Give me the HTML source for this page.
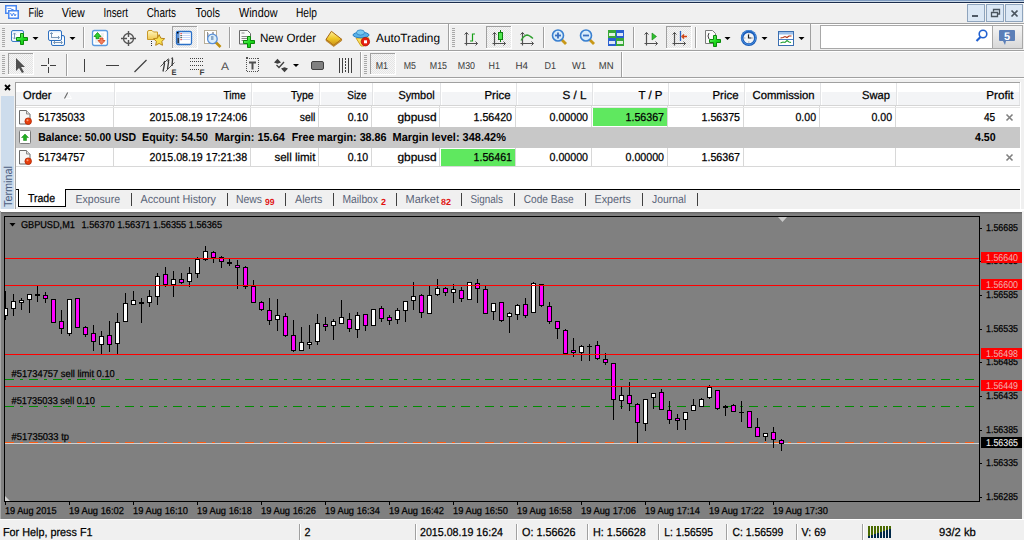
<!DOCTYPE html>
<html><head><meta charset="utf-8"><title>MetaTrader 4</title>
<style>html,body{margin:0;padding:0;background:#f0f0f0;overflow:hidden}svg{display:block}</style></head>
<body><svg width="1024" height="540" viewBox="0 0 1024 540" text-rendering="geometricPrecision">
<rect x="0" y="0" width="1024" height="540" fill="#f0f0f0" />
<rect x="0" y="0" width="1024" height="1" fill="#7f9bc0" />
<rect x="0" y="1" width="1024" height="1" fill="#c5d5e5" />
<rect x="0" y="2" width="1024" height="1" fill="#1b2d4d" />
<rect x="0" y="3" width="1024" height="1" fill="#fafafa" />
<rect x="5.75" y="5.75" width="10.5" height="7.5" fill="#fff" stroke="#4a88f0" stroke-width="1.5"/>
<path d="M7.5 9 l1 -1 l1 1 l1 -1 l1 1.5 h2" stroke="#4a88f0" fill="none" stroke-width="1"/>
<rect x="8.75" y="10.75" width="9.5" height="7.5" fill="#fff" stroke="#4a88f0" stroke-width="1.5"/>
<path d="M10.5 13 l1.5 3 l1.5 -3 l1.5 3 l1 -2" stroke="#4a88f0" fill="none" stroke-width="1"/>
<text x="28.5" y="17" font-family="Liberation Sans" font-size="13" fill="#000" text-anchor="start" font-weight="normal" textLength="15" lengthAdjust="spacingAndGlyphs" >File</text>
<text x="61.8" y="17" font-family="Liberation Sans" font-size="13" fill="#000" text-anchor="start" font-weight="normal" textLength="23" lengthAdjust="spacingAndGlyphs" >View</text>
<text x="103.5" y="17" font-family="Liberation Sans" font-size="13" fill="#000" text-anchor="start" font-weight="normal" textLength="24.5" lengthAdjust="spacingAndGlyphs" >Insert</text>
<text x="146.7" y="17" font-family="Liberation Sans" font-size="13" fill="#000" text-anchor="start" font-weight="normal" textLength="29.3" lengthAdjust="spacingAndGlyphs" >Charts</text>
<text x="195.5" y="17" font-family="Liberation Sans" font-size="13" fill="#000" text-anchor="start" font-weight="normal" textLength="24.5" lengthAdjust="spacingAndGlyphs" >Tools</text>
<text x="239" y="17" font-family="Liberation Sans" font-size="13" fill="#000" text-anchor="start" font-weight="normal" textLength="38.5" lengthAdjust="spacingAndGlyphs" >Window</text>
<text x="296" y="17" font-family="Liberation Sans" font-size="13" fill="#000" text-anchor="start" font-weight="normal" textLength="21" lengthAdjust="spacingAndGlyphs" >Help</text>
<rect x="967.5" y="4.5" width="17" height="17" fill="#dce8f5" stroke="#8ea4bd"/>
<rect x="986.5" y="4.5" width="17" height="17" fill="#dce8f5" stroke="#8ea4bd"/>
<rect x="1005.5" y="4.5" width="17" height="17" fill="#dce8f5" stroke="#8ea4bd"/>
<rect x="972" y="15" width="6" height="2" fill="#505a66" />
<path d="M991.5 12.5 h6 v4 h-6 z M993.5 11.5 v-2 h6 v4.5 h-2" fill="none" stroke="#4a545e" stroke-width="1.3"/>
<path d="M1011.5 10.5 l6 6 M1017.5 10.5 l-6 6" stroke="#4a545e" stroke-width="1.7"/>
<rect x="0" y="23" width="1024" height="1" fill="#a0a0a0" />
<rect x="0" y="24" width="1024" height="1" fill="#ffffff" />
<rect x="0" y="50" width="1024" height="1" fill="#a0a0a0" />
<rect x="0" y="51" width="1024" height="1" fill="#ffffff" />
<rect x="0" y="77" width="1024" height="1" fill="#a0a0a0" />
<rect x="0" y="78" width="1024" height="1" fill="#ffffff" />
<rect x="2" y="28" width="3" height="1" fill="#a8a8a8" />
<rect x="2" y="30" width="3" height="1" fill="#a8a8a8" />
<rect x="2" y="32" width="3" height="1" fill="#a8a8a8" />
<rect x="2" y="34" width="3" height="1" fill="#a8a8a8" />
<rect x="2" y="36" width="3" height="1" fill="#a8a8a8" />
<rect x="2" y="38" width="3" height="1" fill="#a8a8a8" />
<rect x="2" y="40" width="3" height="1" fill="#a8a8a8" />
<rect x="2" y="42" width="3" height="1" fill="#a8a8a8" />
<rect x="2" y="44" width="3" height="1" fill="#a8a8a8" />
<rect x="2" y="46" width="3" height="1" fill="#a8a8a8" />
<defs><linearGradient id="gp" x1="0" y1="0" x2="1" y2="1"><stop offset="0" stop-color="#9cf59c"/><stop offset=".5" stop-color="#20e020"/><stop offset="1" stop-color="#10b010"/></linearGradient><linearGradient id="wb" x1="0" y1="0" x2="0" y2="1"><stop offset="0" stop-color="#cfe2f8"/><stop offset=".3" stop-color="#ffffff"/><stop offset="1" stop-color="#eef4fb"/></linearGradient><linearGradient id="gold" x1="0" y1="0" x2="0" y2="1"><stop offset="0" stop-color="#fff0a0"/><stop offset=".5" stop-color="#f0c828"/><stop offset="1" stop-color="#c89018"/></linearGradient><linearGradient id="fold" x1="0" y1="0" x2="0" y2="1"><stop offset="0" stop-color="#fff8c0"/><stop offset="1" stop-color="#f0c850"/></linearGradient><pattern id="dots" width="2" height="2" patternUnits="userSpaceOnUse"><rect width="2" height="2" fill="#f6f6f6"/><rect width="1" height="1" fill="#e4e4e4"/><rect x="1" y="1" width="1" height="1" fill="#e4e4e4"/></pattern></defs>
<rect x="11.5" y="30.5" width="12" height="11" rx="1.5" fill="url(#wb)" stroke="#3a7cc8"/>
<path d="M14.5 33 v6 M13 34.5 l1.5 -1.5 l1.5 1.5 M13 37.5 l1.5 1.5 l1.5 -1.5" stroke="#7a98b8" fill="none"/>
<path d="M20.5 33.5 h3 v4 h4 v3 h-4 v4 h-3 v-4 h-4 v-3 h4 z" fill="url(#gp)" stroke="#0a8a0a" stroke-width="1"/>
<path d="M32.5 37 h6 l-3 3 z" fill="#000"/>
<rect x="51.5" y="35.5" width="13" height="10" rx="1.5" fill="url(#wb)" stroke="#2e70c0"/>
<path d="M54 42.5 h8 M55 41 l-1.5 1.5 l1.5 1.5 M61 41 l1.5 1.5 l-1.5 1.5" stroke="#7a98b8" fill="none"/>
<rect x="48.5" y="30.5" width="13" height="10" rx="1.5" fill="url(#wb)" stroke="#2e70c0"/>
<path d="M51.5 33 v5 M51 37.5 h8 M58 36 l1.5 1.5 l-1.5 1.5 M50 34 l1.5 -1.5 l1.5 1.5" stroke="#7a98b8" fill="none"/>
<path d="M69.5 37 h6 l-3 3 z" fill="#000"/>
<rect x="83" y="27" width="1" height="21" fill="#a0a0a0" />
<rect x="84" y="27" width="1" height="21" fill="#ffffff" />
<rect x="92.5" y="30.5" width="15" height="15" rx="2" fill="#fff" stroke="#5a9ae0" stroke-width="1.3"/>
<path d="M95 35 h4 M95 40 h3 M95 42 h4 M101 34 h3 M101 36 h3 M104 42 h1" stroke="#e0e0e0"/>
<path d="M97.5 32.5 l3.5 4 h-2 v2.2 h-3 v-2.2 h-2 z" fill="#30d030" stroke="#109010" stroke-width=".8"/>
<path d="M100 38 h3 v2.5 h2 l-3.5 3.8 l-3.5 -3.8 h2 z" fill="#f08060" stroke="#d04010" stroke-width=".8"/>
<circle cx="128.5" cy="38.5" r="5" fill="none" stroke="#555" stroke-width="1.3"/><path d="M128.5 31 v6 M128.5 40 v6 M121 38.5 h6 M130 38.5 h6" stroke="#555" stroke-width="1.4"/>
<path d="M147.5 32 q0 -1.5 1.5 -1.5 h3 l1.5 1.5 h4 v7.5 h-10 z" fill="url(#fold)" stroke="#c89828"/>
<path d="M151.5 41 v1 M151.5 43 v1 M151.5 45 v1" stroke="#303030"/>
<path d="M159.1 34.6 l1.7 3.6 3.9 .5 -2.9 2.7 .7 3.9 -3.4 -1.9 -3.4 1.9 .7 -3.9 -2.9 -2.7 3.9 -.5z" fill="#f8e050" stroke="#b88418" stroke-width="1"/>
<rect x="173" y="27" width="24" height="21" fill="url(#dots)"/>
<rect x="172" y="26" width="26" height="1" fill="#a0a0a0" />
<rect x="172" y="26" width="1" height="23" fill="#a0a0a0" />
<rect x="172" y="48" width="26" height="1" fill="#ffffff" />
<rect x="197" y="26" width="1" height="23" fill="#ffffff" />
<rect x="176.5" y="31.5" width="15" height="13" rx="1.5" fill="#fff" stroke="#2a70c8" stroke-width="1.3"/>
<rect x="177" y="32" width="2.5" height="12" fill="#6090d0"/><rect x="177.5" y="38" width="1.5" height="5" fill="#303840"/>
<path d="M182 33.5 h8 M182 35.5 h8 M182 37.5 h8 M182 39.5 h8" stroke="#c8d8f8"/>
<rect x="180.5" y="33" width="1.2" height="1.2" fill="#e02020"/><rect x="180.5" y="35" width="1.2" height="1.2" fill="#203020"/><rect x="180.5" y="37" width="1.2" height="1.2" fill="#203020"/><rect x="180.5" y="39" width="1.2" height="1.2" fill="#e02020"/>
<rect x="177" y="32" width="1.5" height="1.5" fill="#000"/>
<rect x="204.5" y="30.5" width="12" height="13" fill="#fff" stroke="#b8ae98"/>
<path d="M207.5 32 v8 M207 34 h2 M213 32 v4 M212 33 h2" stroke="#909090"/>
<path d="M215.5 42 l5 5" stroke="#c09010" stroke-width="2.6"/>
<circle cx="212.4" cy="38.9" r="4.8" fill="#d8ecf8" fill-opacity=".9" stroke="#5a90d8" stroke-width="1.3"/>
<rect x="211" y="36" width="2.5" height="4" fill="#8aa8c8"/>
<rect x="229" y="27" width="1" height="21" fill="#a0a0a0" />
<rect x="230" y="27" width="1" height="21" fill="#ffffff" />
<path d="M239.5 30.5 h8 l3 3 v10.5 h-11 z" fill="#fafafa" stroke="#6a6a6a"/>
<path d="M241.5 33 h3 M241.5 36.5 h6 M241.5 38.5 h6 M241.5 40.5 h3" stroke="#888"/>
<path d="M247.5 36.5 h3 v4 h4 v3 h-4 v4 h-3 v-4 h-4 v-3 h4 z" fill="url(#gp)" stroke="#0a8a0a" stroke-width="1"/>
<text x="260" y="42" font-family="Liberation Sans" font-size="12" fill="#000" text-anchor="start" font-weight="normal" textLength="56" lengthAdjust="spacingAndGlyphs" >New Order</text>
<path d="M331.4 31.3 l10.2 7.9 l-7.9 6.3 l-7.7 -6.1 z" fill="url(#gold)" stroke="#a86810" stroke-width="1"/>
<path d="M326 39.4 l7.7 6.1 l7.9 -6.3 v1.5 l-7.9 5.8 l-7.7 -5.8z" fill="#d8a838" stroke="#a86810" stroke-width=".6"/>
<path d="M356 38 h13 l-5 8 h-3 z" fill="#f8e060" stroke="#d0a020"/>
<ellipse cx="361" cy="35" rx="8" ry="2.8" fill="#58b0e8" stroke="#2a80c0"/><ellipse cx="360.5" cy="32.5" rx="4" ry="2.6" fill="#78c8f0" stroke="#2a80c0" stroke-width=".8"/>
<circle cx="365.4" cy="41.7" r="4.2" fill="#e82010" stroke="#b01000" stroke-width=".8"/><rect x="364" y="40.3" width="3" height="3" fill="#fff"/>
<text x="376" y="42" font-family="Liberation Sans" font-size="12" fill="#000" text-anchor="start" font-weight="normal" textLength="64" lengthAdjust="spacingAndGlyphs" >AutoTrading</text>
<rect x="448" y="24" width="1" height="26" fill="#a0a0a0" />
<rect x="449" y="24" width="1" height="26" fill="#ffffff" />
<rect x="452" y="28" width="3" height="1" fill="#a8a8a8" />
<rect x="452" y="30" width="3" height="1" fill="#a8a8a8" />
<rect x="452" y="32" width="3" height="1" fill="#a8a8a8" />
<rect x="452" y="34" width="3" height="1" fill="#a8a8a8" />
<rect x="452" y="36" width="3" height="1" fill="#a8a8a8" />
<rect x="452" y="38" width="3" height="1" fill="#a8a8a8" />
<rect x="452" y="40" width="3" height="1" fill="#a8a8a8" />
<rect x="452" y="42" width="3" height="1" fill="#a8a8a8" />
<rect x="452" y="44" width="3" height="1" fill="#a8a8a8" />
<rect x="452" y="46" width="3" height="1" fill="#a8a8a8" />
<path d="M466.5 32.5 v13 M464.5 43.5 h13" stroke="#505050" stroke-width="1.2"/><path d="M464.5 34.5 l2 -2 l2 2 M475.5 41.5 l2 2 l-2 2" stroke="#505050" fill="none"/>
<path d="M472.5 33.5 v8 M472.5 34 h2.5 M472.5 41 h-2.5" stroke="#18a018" fill="none" stroke-width="1.2"/>
<rect x="487" y="27" width="24" height="21" fill="url(#dots)"/>
<rect x="486" y="26" width="26" height="1" fill="#a0a0a0" />
<rect x="486" y="26" width="1" height="23" fill="#a0a0a0" />
<rect x="486" y="48" width="26" height="1" fill="#ffffff" />
<rect x="511" y="26" width="1" height="23" fill="#ffffff" />
<path d="M494.5 32.5 v13 M492.5 43.5 h13" stroke="#505050" stroke-width="1.2"/><path d="M492.5 34.5 l2 -2 l2 2 M503.5 41.5 l2 2 l-2 2" stroke="#505050" fill="none"/>
<path d="M500.5 30 v12" stroke="#108010"/><rect x="498.5" y="32.5" width="4" height="7" fill="#50e850" stroke="#108010"/>
<path d="M522.5 32.5 v13 M520.5 43.5 h13" stroke="#505050" stroke-width="1.2"/><path d="M520.5 34.5 l2 -2 l2 2 M531.5 41.5 l2 2 l-2 2" stroke="#505050" fill="none"/>
<path d="M521 40.5 q3 -5 6 -5.5 q2 0 6 3.5" stroke="#30a030" fill="none" stroke-width="1.3"/>
<rect x="543" y="27" width="1" height="21" fill="#a0a0a0" />
<rect x="544" y="27" width="1" height="21" fill="#ffffff" />
<path d="M561 39 l5 5" stroke="#c89818" stroke-width="2.8"/>
<circle cx="558" cy="35.5" r="5.5" fill="#d8ecfa" stroke="#3a80d0" stroke-width="1.6"/>
<path d="M555 35.5 h6" stroke="#3a70c0" stroke-width="1.8"/>
<path d="M558 32.5 v6" stroke="#3a70c0" stroke-width="1.8"/>
<path d="M589 39 l5 5" stroke="#c89818" stroke-width="2.8"/>
<circle cx="586" cy="35.5" r="5.5" fill="#d8ecfa" stroke="#3a80d0" stroke-width="1.6"/>
<path d="M583 35.5 h6" stroke="#3a70c0" stroke-width="1.8"/>
<rect x="608" y="30" width="8" height="8" fill="#38a838"/><rect x="609" y="33" width="6" height="3" fill="#fff" opacity=".85"/>
<rect x="616" y="30" width="8" height="8" fill="#2a60d0"/><rect x="617" y="33" width="6" height="3" fill="#fff" opacity=".85"/>
<rect x="608" y="38" width="8" height="8" fill="#2a60d0"/><rect x="609" y="41" width="6" height="3" fill="#fff" opacity=".85"/>
<rect x="616" y="38" width="8" height="8" fill="#38a838"/><rect x="617" y="41" width="6" height="3" fill="#fff" opacity=".85"/>
<rect x="633" y="27" width="1" height="21" fill="#a0a0a0" />
<rect x="634" y="27" width="1" height="21" fill="#ffffff" />
<path d="M646.5 32.5 v13 M644.5 43.5 h13" stroke="#505050" stroke-width="1.2"/><path d="M644.5 34.5 l2 -2 l2 2 M655.5 41.5 l2 2 l-2 2" stroke="#505050" fill="none"/>
<path d="M652 33 l4.5 3.5 l-4.5 3.5 z" fill="#30c030" stroke="#108010" stroke-width=".6"/>
<rect x="667" y="27" width="24" height="21" fill="url(#dots)"/>
<rect x="666" y="26" width="26" height="1" fill="#a0a0a0" />
<rect x="666" y="26" width="1" height="23" fill="#a0a0a0" />
<rect x="666" y="48" width="26" height="1" fill="#ffffff" />
<rect x="691" y="26" width="1" height="23" fill="#ffffff" />
<path d="M674.5 32.5 v13 M672.5 43.5 h13" stroke="#505050" stroke-width="1.2"/><path d="M672.5 34.5 l2 -2 l2 2 M683.5 41.5 l2 2 l-2 2" stroke="#505050" fill="none"/>
<path d="M680.5 31 v10" stroke="#2a60c0" stroke-width="1.3"/><path d="M687 36.5 h-4 M684 34.5 l-2 2 l2 2" stroke="#d04010" fill="none" stroke-width="1.3"/>
<rect x="695" y="27" width="1" height="21" fill="#a0a0a0" />
<rect x="696" y="27" width="1" height="21" fill="#ffffff" />
<path d="M705.5 30.5 h7 l3 3 v10 h-10 z" fill="#fafafa" stroke="#7a7a7a"/><path d="M709 33 q-2 3 0 6" stroke="#404040" fill="none"/>
<path d="M713.5 35.5 h3 v4 h4 v3 h-4 v4 h-3 v-4 h-4 v-3 h4 z" fill="url(#gp)" stroke="#0a8a0a" stroke-width="1"/>
<path d="M724.5 37 h6 l-3 3 z" fill="#000"/>
<circle cx="748.8" cy="38" r="8" fill="#1a5cb8"/><circle cx="748.8" cy="37.5" r="7" fill="none" stroke="#4a90e0" stroke-width="1"/><circle cx="748.8" cy="38" r="5.3" fill="#f2f5f8"/>
<path d="M748.8 33.5 v1 M748.8 41.5 v1 M744.3 38 h1 M752.3 38 h1" stroke="#909090"/><path d="M748.5 34.5 v3.5 h3" stroke="#202020" stroke-width="1.2" fill="none"/>
<path d="M761.5 37 h6 l-3 3 z" fill="#000"/>
<rect x="778.5" y="31.5" width="15" height="14" fill="#fff" stroke="#3a6eb0"/><rect x="779" y="32" width="14" height="2.5" fill="#9cc0ea"/>
<path d="M780.5 38 l2.5 -0.5 l2 -1 l2 1 l2 -1.5 l2.5 0" stroke="#b03010" fill="none" stroke-width="1.1"/>
<path d="M779 39.5 h14" stroke="#4a80c8"/>
<path d="M780.5 43 l2.5 -1 l2 0.5 l2 -2 l2 1.5 l2 0.5" stroke="#20a030" fill="none" stroke-width="1.1"/>
<path d="M798.5 37 h6 l-3 3 z" fill="#000"/>
<rect x="810" y="24" width="1" height="26" fill="#a0a0a0" />
<rect x="820.5" y="25.5" width="172" height="23" fill="#fff" stroke="#a8a8a8"/>
<circle cx="983" cy="34" r="3.8" fill="none" stroke="#2060d0" stroke-width="1.6"/><path d="M980.5 37 l-4 4" stroke="#2060d0" stroke-width="2.2"/>
<defs><linearGradient id="nb" x1="0" y1="0" x2="0" y2="1"><stop offset="0" stop-color="#f4f4f4"/><stop offset="1" stop-color="#d8d8d8"/></linearGradient></defs>
<rect x="992.5" y="25.5" width="30" height="23" fill="url(#nb)" stroke="#a8a8a8"/>
<path d="M1000 30 h14 a1 1 0 0 1 1 1 v9 a1 1 0 0 1 -1 1 h-8 l-1 4 l-2 -4 h-3 a1 1 0 0 1 -1 -1 v-9 a1 1 0 0 1 1 -1z" fill="#5b7fb8"/>
<text x="1007" y="40" font-family="Liberation Sans" font-size="11" fill="#fff" text-anchor="middle" font-weight="bold" >5</text>
<rect x="2" y="55" width="3" height="1" fill="#a8a8a8" />
<rect x="2" y="57" width="3" height="1" fill="#a8a8a8" />
<rect x="2" y="59" width="3" height="1" fill="#a8a8a8" />
<rect x="2" y="61" width="3" height="1" fill="#a8a8a8" />
<rect x="2" y="63" width="3" height="1" fill="#a8a8a8" />
<rect x="2" y="65" width="3" height="1" fill="#a8a8a8" />
<rect x="2" y="67" width="3" height="1" fill="#a8a8a8" />
<rect x="2" y="69" width="3" height="1" fill="#a8a8a8" />
<rect x="2" y="71" width="3" height="1" fill="#a8a8a8" />
<rect x="2" y="73" width="3" height="1" fill="#a8a8a8" />
<rect x="9" y="54" width="24" height="20" fill="url(#dots)"/>
<rect x="8" y="53" width="26" height="1" fill="#a0a0a0" />
<rect x="8" y="53" width="1" height="22" fill="#a0a0a0" />
<rect x="8" y="74" width="26" height="1" fill="#ffffff" />
<rect x="33" y="53" width="1" height="22" fill="#ffffff" />
<path d="M16 58 v13 l3 -3 l3 5 l2 -1 l-3 -5 h4 z" fill="#505050"/>
<path d="M48.5 58 v15 M41 65.5 h15" stroke="#404040" stroke-width="1"/>
<rect x="47" y="64" width="3" height="3" fill="#f0f0f0" />
<rect x="66" y="54" width="1" height="22" fill="#a0a0a0" />
<rect x="67" y="54" width="1" height="22" fill="#ffffff" />
<rect x="84" y="59" width="1" height="13" fill="#404040" />
<rect x="106" y="65" width="13" height="1" fill="#404040" />
<path d="M134.5 72 l12 -12" stroke="#404040" stroke-width="1.2"/>
<path d="M160.5 66.5 l8 -8 M165.5 71.5 l9 -9" stroke="#505050" stroke-width="1"/><path d="M163 71.5 L164.5 64 L163.8 63 L165 61 M167.5 69 L168.6 62 L168 61 L169.2 59.5 M172 66 L172.6 59 L172 58.5 L172.6 57.5" stroke="#383838" fill="none" stroke-width="1.3"/>
<text x="171.5" y="74.5" font-family="Liberation Sans" font-size="8" fill="#404040" text-anchor="start" font-weight="bold" textLength="5" lengthAdjust="spacingAndGlyphs" >E</text>
<rect x="190" y="58" width="1" height="1" fill="#404040" />
<rect x="192" y="58" width="1" height="1" fill="#404040" />
<rect x="194" y="58" width="1" height="1" fill="#404040" />
<rect x="196" y="58" width="1" height="1" fill="#404040" />
<rect x="198" y="58" width="1" height="1" fill="#404040" />
<rect x="200" y="58" width="1" height="1" fill="#404040" />
<rect x="202" y="58" width="1" height="1" fill="#404040" />
<rect x="190" y="61" width="1" height="1" fill="#404040" />
<rect x="192" y="61" width="1" height="1" fill="#404040" />
<rect x="194" y="61" width="1" height="1" fill="#404040" />
<rect x="196" y="61" width="1" height="1" fill="#404040" />
<rect x="198" y="61" width="1" height="1" fill="#404040" />
<rect x="200" y="61" width="1" height="1" fill="#404040" />
<rect x="202" y="61" width="1" height="1" fill="#404040" />
<rect x="190" y="65" width="1" height="1" fill="#404040" />
<rect x="192" y="65" width="1" height="1" fill="#404040" />
<rect x="194" y="65" width="1" height="1" fill="#404040" />
<rect x="196" y="65" width="1" height="1" fill="#404040" />
<rect x="198" y="65" width="1" height="1" fill="#404040" />
<rect x="200" y="65" width="1" height="1" fill="#404040" />
<rect x="202" y="65" width="1" height="1" fill="#404040" />
<rect x="190" y="69" width="1" height="1" fill="#404040" />
<rect x="192" y="69" width="1" height="1" fill="#404040" />
<rect x="194" y="69" width="1" height="1" fill="#404040" />
<rect x="196" y="69" width="1" height="1" fill="#404040" />
<rect x="198" y="69" width="1" height="1" fill="#404040" />
<text x="199.5" y="74.5" font-family="Liberation Sans" font-size="8" fill="#404040" text-anchor="start" font-weight="bold" textLength="5" lengthAdjust="spacingAndGlyphs" >F</text>
<text x="221" y="70" font-family="Liberation Sans" font-size="11" fill="#505050" text-anchor="start" font-weight="normal" textLength="8" lengthAdjust="spacingAndGlyphs" >A</text>
<rect x="247" y="58" width="1" height="1" fill="#505050" />
<rect x="247" y="71" width="1" height="1" fill="#505050" />
<rect x="249" y="58" width="1" height="1" fill="#505050" />
<rect x="249" y="71" width="1" height="1" fill="#505050" />
<rect x="251" y="58" width="1" height="1" fill="#505050" />
<rect x="251" y="71" width="1" height="1" fill="#505050" />
<rect x="253" y="58" width="1" height="1" fill="#505050" />
<rect x="253" y="71" width="1" height="1" fill="#505050" />
<rect x="255" y="58" width="1" height="1" fill="#505050" />
<rect x="255" y="71" width="1" height="1" fill="#505050" />
<rect x="257" y="58" width="1" height="1" fill="#505050" />
<rect x="257" y="71" width="1" height="1" fill="#505050" />
<rect x="246" y="58" width="1" height="1" fill="#505050" />
<rect x="258" y="58" width="1" height="1" fill="#505050" />
<rect x="246" y="60" width="1" height="1" fill="#505050" />
<rect x="258" y="60" width="1" height="1" fill="#505050" />
<rect x="246" y="62" width="1" height="1" fill="#505050" />
<rect x="258" y="62" width="1" height="1" fill="#505050" />
<rect x="246" y="64" width="1" height="1" fill="#505050" />
<rect x="258" y="64" width="1" height="1" fill="#505050" />
<rect x="246" y="66" width="1" height="1" fill="#505050" />
<rect x="258" y="66" width="1" height="1" fill="#505050" />
<rect x="246" y="68" width="1" height="1" fill="#505050" />
<rect x="258" y="68" width="1" height="1" fill="#505050" />
<rect x="246" y="70" width="1" height="1" fill="#505050" />
<rect x="258" y="70" width="1" height="1" fill="#505050" />
<rect x="246" y="57" width="2" height="2" fill="#505050" />
<path d="M249 62.5 h7 M252.5 62 v7.5" stroke="#505050" stroke-width="2"/>
<path d="M274 62.5 l3.5 -3.8 l3.5 3.8 l-3.5 1.2 z M281 68.5 l3.5 -1.2 l3.5 1.2 l-3.5 3.8 z" fill="#404040"/><path d="M276.5 65 l2.5 2.5 l5 -5.5" stroke="#404040" fill="none" stroke-width="1.3"/>
<path d="M293 64 h6 l-3 3 z" fill="#000"/>
<rect x="311.5" y="61.5" width="12" height="8" rx="1.5" fill="#808080" stroke="#404040"/>
<rect x="339" y="58" width="1" height="15" fill="#404040" />
<rect x="342" y="58" width="1" height="15" fill="#404040" />
<rect x="348" y="58" width="1" height="15" fill="#404040" />
<rect x="351" y="58" width="1" height="15" fill="#404040" />
<rect x="345" y="58" width="1" height="2" fill="#404040" />
<rect x="345" y="61" width="1" height="2" fill="#404040" />
<rect x="345" y="64" width="1" height="2" fill="#404040" />
<rect x="345" y="67" width="1" height="2" fill="#404040" />
<rect x="345" y="70" width="1" height="2" fill="#404040" />
<rect x="360" y="52" width="1" height="25" fill="#a0a0a0" />
<rect x="361" y="52" width="1" height="25" fill="#ffffff" />
<rect x="364" y="55" width="3" height="1" fill="#a8a8a8" />
<rect x="364" y="57" width="3" height="1" fill="#a8a8a8" />
<rect x="364" y="59" width="3" height="1" fill="#a8a8a8" />
<rect x="364" y="61" width="3" height="1" fill="#a8a8a8" />
<rect x="364" y="63" width="3" height="1" fill="#a8a8a8" />
<rect x="364" y="65" width="3" height="1" fill="#a8a8a8" />
<rect x="364" y="67" width="3" height="1" fill="#a8a8a8" />
<rect x="364" y="69" width="3" height="1" fill="#a8a8a8" />
<rect x="364" y="71" width="3" height="1" fill="#a8a8a8" />
<rect x="364" y="73" width="3" height="1" fill="#a8a8a8" />
<rect x="371" y="54" width="24" height="20" fill="url(#dots)"/>
<rect x="370" y="53" width="26" height="1" fill="#a0a0a0" />
<rect x="370" y="53" width="1" height="22" fill="#a0a0a0" />
<rect x="370" y="74" width="26" height="1" fill="#ffffff" />
<rect x="395" y="53" width="1" height="22" fill="#ffffff" />
<text x="375.75" y="69" font-family="Liberation Sans" font-size="10" fill="#404040" text-anchor="start" font-weight="normal" textLength="12.25" lengthAdjust="spacingAndGlyphs" stroke="#404040" stroke-width="0.05" >M1</text>
<text x="403.75" y="69" font-family="Liberation Sans" font-size="10" fill="#404040" text-anchor="start" font-weight="normal" textLength="12.25" lengthAdjust="spacingAndGlyphs" stroke="#404040" stroke-width="0.05" >M5</text>
<text x="429.75" y="69" font-family="Liberation Sans" font-size="10" fill="#404040" text-anchor="start" font-weight="normal" textLength="17.25" lengthAdjust="spacingAndGlyphs" stroke="#404040" stroke-width="0.05" >M15</text>
<text x="457.75" y="69" font-family="Liberation Sans" font-size="10" fill="#404040" text-anchor="start" font-weight="normal" textLength="17.25" lengthAdjust="spacingAndGlyphs" stroke="#404040" stroke-width="0.05" >M30</text>
<text x="488.6" y="69" font-family="Liberation Sans" font-size="10" fill="#404040" text-anchor="start" font-weight="normal" textLength="11.4" lengthAdjust="spacingAndGlyphs" stroke="#404040" stroke-width="0.05" >H1</text>
<text x="515.5" y="69" font-family="Liberation Sans" font-size="10" fill="#404040" text-anchor="start" font-weight="normal" textLength="12.5" lengthAdjust="spacingAndGlyphs" stroke="#404040" stroke-width="0.05" >H4</text>
<text x="544.5" y="69" font-family="Liberation Sans" font-size="10" fill="#404040" text-anchor="start" font-weight="normal" textLength="11.5" lengthAdjust="spacingAndGlyphs" stroke="#404040" stroke-width="0.05" >D1</text>
<text x="571.9" y="69" font-family="Liberation Sans" font-size="10" fill="#404040" text-anchor="start" font-weight="normal" textLength="14.1" lengthAdjust="spacingAndGlyphs" stroke="#404040" stroke-width="0.05" >W1</text>
<text x="598.75" y="69" font-family="Liberation Sans" font-size="10" fill="#404040" text-anchor="start" font-weight="normal" textLength="14.75" lengthAdjust="spacingAndGlyphs" stroke="#404040" stroke-width="0.05" >MN</text>
<rect x="621" y="52" width="1" height="25" fill="#a0a0a0" />
<rect x="622" y="52" width="1" height="25" fill="#ffffff" />
<path d="M5 85 l5 5 M10 85 l-5 5" stroke="#000" stroke-width="1.8"/>
<rect x="1" y="96" width="13" height="114" fill="#cddcec" />
<text transform="translate(12,207) rotate(-90)" font-family="Liberation Sans" font-size="11.5" fill="#4c5c80" textLength="41" lengthAdjust="spacingAndGlyphs">Terminal</text>
<rect x="15" y="82" width="1006" height="108" fill="#a0a0a0" />
<rect x="16" y="83" width="1004" height="106" fill="#ffffff" />
<rect x="16" y="83" width="1004" height="9" fill="#ffffff" />
<rect x="16" y="92" width="1004" height="13" fill="#f3f4f6" />
<rect x="16" y="105" width="1004" height="1" fill="#d5d5d5" />
<rect x="114" y="83" width="1" height="22" fill="#e2e3e5" />
<rect x="115" y="83" width="1" height="22" fill="#ffffff" />
<rect x="251" y="83" width="1" height="22" fill="#e2e3e5" />
<rect x="252" y="83" width="1" height="22" fill="#ffffff" />
<rect x="319" y="83" width="1" height="22" fill="#e2e3e5" />
<rect x="320" y="83" width="1" height="22" fill="#ffffff" />
<rect x="372" y="83" width="1" height="22" fill="#e2e3e5" />
<rect x="373" y="83" width="1" height="22" fill="#ffffff" />
<rect x="440" y="83" width="1" height="22" fill="#e2e3e5" />
<rect x="441" y="83" width="1" height="22" fill="#ffffff" />
<rect x="516" y="83" width="1" height="22" fill="#e2e3e5" />
<rect x="517" y="83" width="1" height="22" fill="#ffffff" />
<rect x="592" y="83" width="1" height="22" fill="#e2e3e5" />
<rect x="593" y="83" width="1" height="22" fill="#ffffff" />
<rect x="668" y="83" width="1" height="22" fill="#e2e3e5" />
<rect x="669" y="83" width="1" height="22" fill="#ffffff" />
<rect x="744" y="83" width="1" height="22" fill="#e2e3e5" />
<rect x="745" y="83" width="1" height="22" fill="#ffffff" />
<rect x="820" y="83" width="1" height="22" fill="#e2e3e5" />
<rect x="821" y="83" width="1" height="22" fill="#ffffff" />
<rect x="896" y="83" width="1" height="22" fill="#e2e3e5" />
<rect x="897" y="83" width="1" height="22" fill="#ffffff" />
<rect x="1019" y="83" width="1" height="22" fill="#e2e3e5" />
<rect x="113" y="106" width="1" height="21" fill="#d8d8d8" />
<rect x="250" y="106" width="1" height="21" fill="#d8d8d8" />
<rect x="318" y="106" width="1" height="21" fill="#d8d8d8" />
<rect x="371" y="106" width="1" height="21" fill="#d8d8d8" />
<rect x="439" y="106" width="1" height="21" fill="#d8d8d8" />
<rect x="515" y="106" width="1" height="21" fill="#d8d8d8" />
<rect x="591" y="106" width="1" height="21" fill="#d8d8d8" />
<rect x="667" y="106" width="1" height="21" fill="#d8d8d8" />
<rect x="743" y="106" width="1" height="21" fill="#d8d8d8" />
<rect x="819" y="106" width="1" height="21" fill="#d8d8d8" />
<rect x="895" y="106" width="1" height="21" fill="#d8d8d8" />
<rect x="113" y="148" width="1" height="18" fill="#d8d8d8" />
<rect x="250" y="148" width="1" height="18" fill="#d8d8d8" />
<rect x="318" y="148" width="1" height="18" fill="#d8d8d8" />
<rect x="371" y="148" width="1" height="18" fill="#d8d8d8" />
<rect x="439" y="148" width="1" height="18" fill="#d8d8d8" />
<rect x="515" y="148" width="1" height="18" fill="#d8d8d8" />
<rect x="591" y="148" width="1" height="18" fill="#d8d8d8" />
<rect x="667" y="148" width="1" height="18" fill="#d8d8d8" />
<rect x="743" y="148" width="1" height="18" fill="#d8d8d8" />
<rect x="895" y="148" width="1" height="18" fill="#d8d8d8" />
<rect x="16" y="166" width="1004" height="1" fill="#d8d8d8" />
<rect x="16" y="107" width="1004" height="1" fill="#e6e6e6" />
<rect x="16" y="127" width="1004" height="21" fill="#c8c8c8" />
<rect x="896" y="126" width="124" height="1" fill="#ffffff" />
<rect x="593" y="108" width="74" height="18" fill="#5fe85f" />
<rect x="441" y="149" width="74" height="17" fill="#5fe85f" />
<text x="23" y="99" font-family="Liberation Sans" font-size="11.5" fill="#000" text-anchor="start" font-weight="normal" textLength="28.5" lengthAdjust="spacingAndGlyphs" stroke="#000" stroke-width="0.25" >Order</text>
<path d="M68 92.5 l3.5 6 h-7" stroke="#ffffff" fill="none"/><path d="M64.5 98.5 l3.2 -6" stroke="#666" stroke-width="1.1"/>
<text x="245.5" y="99" font-family="Liberation Sans" font-size="11.5" fill="#000" text-anchor="end" font-weight="normal" textLength="22" lengthAdjust="spacingAndGlyphs" stroke="#000" stroke-width="0.25" >Time</text>
<text x="313.5" y="99" font-family="Liberation Sans" font-size="11.5" fill="#000" text-anchor="end" font-weight="normal" textLength="22.5" lengthAdjust="spacingAndGlyphs" stroke="#000" stroke-width="0.25" >Type</text>
<text x="366.6" y="99" font-family="Liberation Sans" font-size="11.5" fill="#000" text-anchor="end" font-weight="normal" textLength="19.3" lengthAdjust="spacingAndGlyphs" stroke="#000" stroke-width="0.25" >Size</text>
<text x="434.6" y="99" font-family="Liberation Sans" font-size="11.5" fill="#000" text-anchor="end" font-weight="normal" textLength="36.2" lengthAdjust="spacingAndGlyphs" stroke="#000" stroke-width="0.25" >Symbol</text>
<text x="510.5" y="99" font-family="Liberation Sans" font-size="11.5" fill="#000" text-anchor="end" font-weight="normal" textLength="26" lengthAdjust="spacingAndGlyphs" stroke="#000" stroke-width="0.25" >Price</text>
<text x="586.5" y="99" font-family="Liberation Sans" font-size="11.5" fill="#000" text-anchor="end" font-weight="normal" textLength="24" lengthAdjust="spacingAndGlyphs" stroke="#000" stroke-width="0.25" >S / L</text>
<text x="662.5" y="99" font-family="Liberation Sans" font-size="11.5" fill="#000" text-anchor="end" font-weight="normal" textLength="24" lengthAdjust="spacingAndGlyphs" stroke="#000" stroke-width="0.25" >T / P</text>
<text x="738.5" y="99" font-family="Liberation Sans" font-size="11.5" fill="#000" text-anchor="end" font-weight="normal" textLength="26" lengthAdjust="spacingAndGlyphs" stroke="#000" stroke-width="0.25" >Price</text>
<text x="814.5" y="99" font-family="Liberation Sans" font-size="11.5" fill="#000" text-anchor="end" font-weight="normal" textLength="62" lengthAdjust="spacingAndGlyphs" stroke="#000" stroke-width="0.25" >Commission</text>
<text x="890" y="99" font-family="Liberation Sans" font-size="11.5" fill="#000" text-anchor="end" font-weight="normal" textLength="28" lengthAdjust="spacingAndGlyphs" stroke="#000" stroke-width="0.25" >Swap</text>
<text x="1013.5" y="99" font-family="Liberation Sans" font-size="11.5" fill="#000" text-anchor="end" font-weight="normal" textLength="27.2" lengthAdjust="spacingAndGlyphs" stroke="#000" stroke-width="0.25" >Profit</text>
<path d="M19.5 110.5 h7 l3.5 3.5 v10 h-10.5 z" fill="#f6f6f6" stroke="#6a6a6a"/><path d="M26.5 110.5 v3.5 h3.5" fill="#e0e0e0" stroke="#8a8a8a"/>
<circle cx="28.2" cy="121.2" r="3.3" fill="#e8400c" stroke="#a82000" stroke-width=".7"/><circle cx="27.5" cy="120.3" r="1" fill="#ffa080"/>
<path d="M19.5 150.5 h7 l3.5 3.5 v10 h-10.5 z" fill="#f6f6f6" stroke="#6a6a6a"/><path d="M26.5 150.5 v3.5 h3.5" fill="#e0e0e0" stroke="#8a8a8a"/>
<circle cx="28.2" cy="161.2" r="3.3" fill="#e8400c" stroke="#a82000" stroke-width=".7"/><circle cx="27.5" cy="160.3" r="1" fill="#ffa080"/>
<rect x="19.5" y="130.5" width="11" height="13" rx="1" fill="#fff" stroke="#7a7a7a"/><path d="M25 134 l-3.5 3.5 h2 v3 h3 v-3 h2 z" fill="#20b020" stroke="#108010" stroke-width=".5"/>
<text x="38.4" y="121" font-family="Liberation Sans" font-size="11.5" fill="#000" text-anchor="start" font-weight="normal" textLength="46.4" lengthAdjust="spacingAndGlyphs" stroke="#000" stroke-width="0.25" >51735033</text>
<text x="38.4" y="161" font-family="Liberation Sans" font-size="11.5" fill="#000" text-anchor="start" font-weight="normal" textLength="46.4" lengthAdjust="spacingAndGlyphs" stroke="#000" stroke-width="0.25" >51734757</text>
<text x="247.2" y="121" font-family="Liberation Sans" font-size="11.5" fill="#000" text-anchor="end" font-weight="normal" textLength="97.7" lengthAdjust="spacingAndGlyphs" stroke="#000" stroke-width="0.25" >2015.08.19 17:24:06</text>
<text x="315.4" y="121" font-family="Liberation Sans" font-size="11.5" fill="#000" text-anchor="end" font-weight="normal" textLength="15.6" lengthAdjust="spacingAndGlyphs" stroke="#000" stroke-width="0.25" >sell</text>
<text x="368.2" y="121" font-family="Liberation Sans" font-size="11.5" fill="#000" text-anchor="end" font-weight="normal" textLength="20.5" lengthAdjust="spacingAndGlyphs" stroke="#000" stroke-width="0.25" >0.10</text>
<text x="436.5" y="121" font-family="Liberation Sans" font-size="11.5" fill="#000" text-anchor="end" font-weight="normal" textLength="39" lengthAdjust="spacingAndGlyphs" stroke="#000" stroke-width="0.25" >gbpusd</text>
<text x="512" y="121" font-family="Liberation Sans" font-size="11.5" fill="#000" text-anchor="end" font-weight="normal" textLength="38.5" lengthAdjust="spacingAndGlyphs" stroke="#000" stroke-width="0.25" >1.56420</text>
<text x="588" y="121" font-family="Liberation Sans" font-size="11.5" fill="#000" text-anchor="end" font-weight="normal" textLength="38.5" lengthAdjust="spacingAndGlyphs" stroke="#000" stroke-width="0.25" >0.00000</text>
<text x="664" y="121" font-family="Liberation Sans" font-size="11.5" fill="#000" text-anchor="end" font-weight="normal" textLength="38.5" lengthAdjust="spacingAndGlyphs" stroke="#000" stroke-width="0.25" >1.56367</text>
<text x="740" y="121" font-family="Liberation Sans" font-size="11.5" fill="#000" text-anchor="end" font-weight="normal" textLength="38.5" lengthAdjust="spacingAndGlyphs" stroke="#000" stroke-width="0.25" >1.56375</text>
<text x="816" y="121" font-family="Liberation Sans" font-size="11.5" fill="#000" text-anchor="end" font-weight="normal" textLength="20.5" lengthAdjust="spacingAndGlyphs" stroke="#000" stroke-width="0.25" >0.00</text>
<text x="892" y="121" font-family="Liberation Sans" font-size="11.5" fill="#000" text-anchor="end" font-weight="normal" textLength="20.5" lengthAdjust="spacingAndGlyphs" stroke="#000" stroke-width="0.25" >0.00</text>
<text x="995.2" y="121" font-family="Liberation Sans" font-size="11.5" fill="#000" text-anchor="end" font-weight="normal" textLength="11.2" lengthAdjust="spacingAndGlyphs" stroke="#000" stroke-width="0.25" >45</text>
<text x="247.2" y="161" font-family="Liberation Sans" font-size="11.5" fill="#000" text-anchor="end" font-weight="normal" textLength="97.7" lengthAdjust="spacingAndGlyphs" stroke="#000" stroke-width="0.25" >2015.08.19 17:21:38</text>
<text x="315.4" y="161" font-family="Liberation Sans" font-size="11.5" fill="#000" text-anchor="end" font-weight="normal" textLength="41" lengthAdjust="spacingAndGlyphs" stroke="#000" stroke-width="0.25" >sell limit</text>
<text x="368.2" y="161" font-family="Liberation Sans" font-size="11.5" fill="#000" text-anchor="end" font-weight="normal" textLength="20.5" lengthAdjust="spacingAndGlyphs" stroke="#000" stroke-width="0.25" >0.10</text>
<text x="436.5" y="161" font-family="Liberation Sans" font-size="11.5" fill="#000" text-anchor="end" font-weight="normal" textLength="39" lengthAdjust="spacingAndGlyphs" stroke="#000" stroke-width="0.25" >gbpusd</text>
<text x="512" y="161" font-family="Liberation Sans" font-size="11.5" fill="#000" text-anchor="end" font-weight="normal" textLength="38.5" lengthAdjust="spacingAndGlyphs" stroke="#000" stroke-width="0.25" >1.56461</text>
<text x="588" y="161" font-family="Liberation Sans" font-size="11.5" fill="#000" text-anchor="end" font-weight="normal" textLength="38.5" lengthAdjust="spacingAndGlyphs" stroke="#000" stroke-width="0.25" >0.00000</text>
<text x="664" y="161" font-family="Liberation Sans" font-size="11.5" fill="#000" text-anchor="end" font-weight="normal" textLength="38.5" lengthAdjust="spacingAndGlyphs" stroke="#000" stroke-width="0.25" >0.00000</text>
<text x="740" y="161" font-family="Liberation Sans" font-size="11.5" fill="#000" text-anchor="end" font-weight="normal" textLength="38.5" lengthAdjust="spacingAndGlyphs" stroke="#000" stroke-width="0.25" >1.56367</text>
<text x="38.2" y="141" font-family="Liberation Sans" font-size="11.5" fill="#000" text-anchor="start" font-weight="bold" textLength="98" lengthAdjust="spacingAndGlyphs" >Balance: 50.00 USD</text>
<text x="142" y="141" font-family="Liberation Sans" font-size="11.5" fill="#000" text-anchor="start" font-weight="bold" textLength="66" lengthAdjust="spacingAndGlyphs" >Equity: 54.50</text>
<text x="214.7" y="141" font-family="Liberation Sans" font-size="11.5" fill="#000" text-anchor="start" font-weight="bold" textLength="70.2" lengthAdjust="spacingAndGlyphs" >Margin: 15.64</text>
<text x="291.7" y="141" font-family="Liberation Sans" font-size="11.5" fill="#000" text-anchor="start" font-weight="bold" textLength="94.8" lengthAdjust="spacingAndGlyphs" >Free margin: 38.86</text>
<text x="392.5" y="141" font-family="Liberation Sans" font-size="11.5" fill="#000" text-anchor="start" font-weight="bold" textLength="113.4" lengthAdjust="spacingAndGlyphs" >Margin level: 348.42%</text>
<text x="995.6" y="141" font-family="Liberation Sans" font-size="11.5" fill="#000" text-anchor="end" font-weight="bold" textLength="20.6" lengthAdjust="spacingAndGlyphs" >4.50</text>
<path d="M1006.5 114.5 l6 6 M1012.5 114.5 l-6 6" stroke="#808080" stroke-width="1.6"/>
<path d="M1006.5 154.5 l6 6 M1012.5 154.5 l-6 6" stroke="#808080" stroke-width="1.6"/>
<rect x="16" y="190" width="1005" height="19" fill="#f0f0f0" />
<rect x="15" y="190" width="1" height="20" fill="#a0a0a0" />
<rect x="16" y="189" width="1005" height="1" fill="#000000" />
<rect x="18" y="189" width="48" height="18" fill="#ffffff" />
<rect x="18" y="189" width="1" height="18" fill="#000" />
<rect x="65" y="189" width="1" height="18" fill="#000" />
<rect x="18" y="206" width="48" height="1" fill="#000" />
<rect x="16" y="190" width="2" height="17" fill="#ffffff" />
<rect x="1020" y="82" width="1" height="128" fill="#ffffff" />
<text x="27.9" y="202" font-family="Liberation Sans" font-size="11.5" fill="#000" text-anchor="start" font-weight="normal" textLength="27.2" lengthAdjust="spacingAndGlyphs" stroke="#000" stroke-width="0.25" >Trade</text>
<text x="75.5" y="202.7" font-family="Liberation Sans" font-size="11.5" fill="#5a6478" text-anchor="start" font-weight="normal" textLength="44.5" lengthAdjust="spacingAndGlyphs" >Exposure</text>
<text x="140.5" y="202.7" font-family="Liberation Sans" font-size="11.5" fill="#5a6478" text-anchor="start" font-weight="normal" textLength="75.5" lengthAdjust="spacingAndGlyphs" >Account History</text>
<text x="236" y="202.7" font-family="Liberation Sans" font-size="11.5" fill="#5a6478" text-anchor="start" font-weight="normal" textLength="26" lengthAdjust="spacingAndGlyphs" >News</text>
<text x="295" y="202.7" font-family="Liberation Sans" font-size="11.5" fill="#5a6478" text-anchor="start" font-weight="normal" textLength="27.5" lengthAdjust="spacingAndGlyphs" >Alerts</text>
<text x="342.5" y="202.7" font-family="Liberation Sans" font-size="11.5" fill="#5a6478" text-anchor="start" font-weight="normal" textLength="35.5" lengthAdjust="spacingAndGlyphs" >Mailbox</text>
<text x="405.5" y="202.7" font-family="Liberation Sans" font-size="11.5" fill="#5a6478" text-anchor="start" font-weight="normal" textLength="33.5" lengthAdjust="spacingAndGlyphs" >Market</text>
<text x="470.5" y="202.7" font-family="Liberation Sans" font-size="11.5" fill="#5a6478" text-anchor="start" font-weight="normal" textLength="32.5" lengthAdjust="spacingAndGlyphs" >Signals</text>
<text x="523.75" y="202.7" font-family="Liberation Sans" font-size="11.5" fill="#5a6478" text-anchor="start" font-weight="normal" textLength="50" lengthAdjust="spacingAndGlyphs" >Code Base</text>
<text x="594.5" y="202.7" font-family="Liberation Sans" font-size="11.5" fill="#5a6478" text-anchor="start" font-weight="normal" textLength="36.5" lengthAdjust="spacingAndGlyphs" >Experts</text>
<text x="652" y="202.7" font-family="Liberation Sans" font-size="11.5" fill="#5a6478" text-anchor="start" font-weight="normal" textLength="34" lengthAdjust="spacingAndGlyphs" >Journal</text>
<rect x="131" y="193" width="1" height="13" fill="#404040" />
<rect x="227" y="193" width="1" height="13" fill="#404040" />
<rect x="285" y="193" width="1" height="13" fill="#404040" />
<rect x="333" y="193" width="1" height="13" fill="#404040" />
<rect x="396" y="193" width="1" height="13" fill="#404040" />
<rect x="461" y="193" width="1" height="13" fill="#404040" />
<rect x="514" y="193" width="1" height="13" fill="#404040" />
<rect x="585" y="193" width="1" height="13" fill="#404040" />
<rect x="642" y="193" width="1" height="13" fill="#404040" />
<rect x="697" y="193" width="1" height="13" fill="#404040" />
<text x="265" y="205" font-family="Liberation Sans" font-size="9" fill="#e01010" text-anchor="start" font-weight="bold" textLength="9.5" lengthAdjust="spacingAndGlyphs" >99</text>
<text x="381" y="205" font-family="Liberation Sans" font-size="9" fill="#e01010" text-anchor="start" font-weight="bold" textLength="5" lengthAdjust="spacingAndGlyphs" >2</text>
<text x="441" y="205" font-family="Liberation Sans" font-size="9" fill="#e01010" text-anchor="start" font-weight="bold" textLength="10" lengthAdjust="spacingAndGlyphs" >82</text>
<rect x="0" y="209" width="1024" height="1" fill="#ffffff" />
<rect x="0" y="210" width="1024" height="1" fill="#ffffff" />
<rect x="0" y="212" width="1024" height="308" fill="#808080" />
<rect x="0" y="211" width="1024" height="1" fill="#ffffff" />
<rect x="0" y="212" width="1024" height="1" fill="#6a6a6a" />
<rect x="0" y="213" width="1024" height="1" fill="#767676" />
<rect x="0" y="211" width="1" height="309" fill="#a8a8a8" />
<rect x="1022" y="211" width="2" height="309" fill="#f4f4f4" />
<rect x="0" y="519" width="1024" height="1" fill="#ffffff" />
<clipPath id="cc"><rect x="5" y="217" width="974" height="284"/></clipPath>
<g clip-path="url(#cc)"><path d="M5 379.5 H974" stroke="#008c00" stroke-width="1" stroke-dasharray="9 6 3 6"/></g>
<g clip-path="url(#cc)"><path d="M5 406.5 H974" stroke="#008c00" stroke-width="1" stroke-dasharray="9 6 3 6"/></g>
<rect x="5" y="443" width="974" height="1" fill="#d0d0d0" />
<g clip-path="url(#cc)"><path d="M5 442.5 H974" stroke="#ff5a10" stroke-width="1" stroke-dasharray="9 6 3 6"/></g>
<g clip-path="url(#cc)" shape-rendering="crispEdges">
<rect x="5" y="291" width="1" height="29" fill="#000" />
<rect x="3" y="308" width="5" height="8" fill="#000" />
<rect x="4" y="309" width="3" height="6" fill="#ffffff" />
<rect x="13" y="294" width="1" height="22" fill="#000" />
<rect x="11" y="301" width="5" height="8" fill="#000" />
<rect x="12" y="302" width="3" height="6" fill="#ffffff" />
<rect x="21" y="298" width="1" height="12" fill="#000" />
<rect x="19" y="300" width="5" height="3" fill="#000" />
<rect x="20" y="301" width="3" height="1" fill="#ffffff" />
<rect x="29" y="294" width="1" height="19" fill="#000" />
<rect x="27" y="294" width="5" height="6" fill="#000" />
<rect x="28" y="295" width="3" height="4" fill="#ffffff" />
<rect x="37" y="286" width="1" height="16" fill="#000" />
<rect x="35" y="294" width="5" height="2" fill="#000" />
<rect x="45" y="292" width="1" height="11" fill="#000" />
<rect x="43" y="295" width="5" height="4" fill="#000" />
<rect x="44" y="296" width="3" height="2" fill="#ff00ff" />
<rect x="53" y="299" width="1" height="24" fill="#000" />
<rect x="51" y="299" width="5" height="24" fill="#000" />
<rect x="52" y="300" width="3" height="22" fill="#ff00ff" />
<rect x="61" y="310" width="1" height="24" fill="#000" />
<rect x="59" y="321" width="5" height="8" fill="#000" />
<rect x="60" y="322" width="3" height="6" fill="#ff00ff" />
<rect x="69" y="299" width="1" height="37" fill="#000" />
<rect x="67" y="299" width="5" height="35" fill="#000" />
<rect x="68" y="300" width="3" height="33" fill="#ffffff" />
<rect x="77" y="298" width="1" height="30" fill="#000" />
<rect x="75" y="298" width="5" height="30" fill="#000" />
<rect x="76" y="299" width="3" height="28" fill="#ff00ff" />
<rect x="85" y="326" width="1" height="11" fill="#000" />
<rect x="83" y="327" width="5" height="8" fill="#000" />
<rect x="84" y="328" width="3" height="6" fill="#ff00ff" />
<rect x="93" y="325" width="1" height="26" fill="#000" />
<rect x="91" y="333" width="5" height="9" fill="#000" />
<rect x="92" y="334" width="3" height="7" fill="#ff00ff" />
<rect x="101" y="331" width="1" height="23" fill="#000" />
<rect x="99" y="336" width="5" height="9" fill="#000" />
<rect x="100" y="337" width="3" height="7" fill="#ffffff" />
<rect x="109" y="321" width="1" height="31" fill="#000" />
<rect x="107" y="335" width="5" height="10" fill="#000" />
<rect x="108" y="336" width="3" height="8" fill="#ff00ff" />
<rect x="117" y="313" width="1" height="41" fill="#000" />
<rect x="115" y="322" width="5" height="22" fill="#000" />
<rect x="116" y="323" width="3" height="20" fill="#ffffff" />
<rect x="125" y="293" width="1" height="29" fill="#000" />
<rect x="123" y="303" width="5" height="19" fill="#000" />
<rect x="124" y="304" width="3" height="17" fill="#ffffff" />
<rect x="133" y="291" width="1" height="14" fill="#000" />
<rect x="131" y="300" width="5" height="5" fill="#000" />
<rect x="132" y="301" width="3" height="3" fill="#ffffff" />
<rect x="141" y="298" width="1" height="25" fill="#000" />
<rect x="139" y="302" width="5" height="2" fill="#000" />
<rect x="149" y="290" width="1" height="17" fill="#000" />
<rect x="147" y="296" width="5" height="7" fill="#000" />
<rect x="148" y="297" width="3" height="5" fill="#ffffff" />
<rect x="157" y="273" width="1" height="32" fill="#000" />
<rect x="155" y="276" width="5" height="21" fill="#000" />
<rect x="156" y="277" width="3" height="19" fill="#ffffff" />
<rect x="165" y="267" width="1" height="20" fill="#000" />
<rect x="163" y="274" width="5" height="11" fill="#000" />
<rect x="164" y="275" width="3" height="9" fill="#ff00ff" />
<rect x="173" y="271" width="1" height="26" fill="#000" />
<rect x="171" y="279" width="5" height="6" fill="#000" />
<rect x="172" y="280" width="3" height="4" fill="#ffffff" />
<rect x="181" y="273" width="1" height="11" fill="#000" />
<rect x="179" y="279" width="5" height="4" fill="#000" />
<rect x="180" y="280" width="3" height="2" fill="#ff00ff" />
<rect x="189" y="267" width="1" height="20" fill="#000" />
<rect x="187" y="273" width="5" height="9" fill="#000" />
<rect x="188" y="274" width="3" height="7" fill="#ffffff" />
<rect x="197" y="257" width="1" height="21" fill="#000" />
<rect x="195" y="259" width="5" height="15" fill="#000" />
<rect x="196" y="260" width="3" height="13" fill="#ffffff" />
<rect x="205" y="246" width="1" height="15" fill="#000" />
<rect x="203" y="251" width="5" height="9" fill="#000" />
<rect x="204" y="252" width="3" height="7" fill="#ffffff" />
<rect x="213" y="251" width="1" height="12" fill="#000" />
<rect x="211" y="252" width="5" height="6" fill="#000" />
<rect x="212" y="253" width="3" height="4" fill="#ff00ff" />
<rect x="221" y="256" width="1" height="12" fill="#000" />
<rect x="219" y="257" width="5" height="5" fill="#000" />
<rect x="220" y="258" width="3" height="3" fill="#ff00ff" />
<rect x="229" y="259" width="1" height="7" fill="#000" />
<rect x="227" y="262" width="5" height="2" fill="#000" />
<rect x="237" y="260" width="1" height="29" fill="#000" />
<rect x="235" y="265" width="5" height="3" fill="#000" />
<rect x="236" y="266" width="3" height="1" fill="#ff00ff" />
<rect x="245" y="266" width="1" height="23" fill="#000" />
<rect x="243" y="267" width="5" height="20" fill="#000" />
<rect x="244" y="268" width="3" height="18" fill="#ff00ff" />
<rect x="253" y="280" width="1" height="23" fill="#000" />
<rect x="251" y="286" width="5" height="17" fill="#000" />
<rect x="252" y="287" width="3" height="15" fill="#ff00ff" />
<rect x="261" y="301" width="1" height="10" fill="#000" />
<rect x="259" y="302" width="5" height="8" fill="#000" />
<rect x="260" y="303" width="3" height="6" fill="#ff00ff" />
<rect x="269" y="298" width="1" height="27" fill="#000" />
<rect x="267" y="310" width="5" height="11" fill="#000" />
<rect x="268" y="311" width="3" height="9" fill="#ff00ff" />
<rect x="277" y="299" width="1" height="32" fill="#000" />
<rect x="275" y="315" width="5" height="5" fill="#000" />
<rect x="276" y="316" width="3" height="3" fill="#ffffff" />
<rect x="285" y="313" width="1" height="24" fill="#000" />
<rect x="283" y="316" width="5" height="20" fill="#000" />
<rect x="284" y="317" width="3" height="18" fill="#ff00ff" />
<rect x="293" y="320" width="1" height="32" fill="#000" />
<rect x="291" y="335" width="5" height="16" fill="#000" />
<rect x="292" y="336" width="3" height="14" fill="#ff00ff" />
<rect x="301" y="327" width="1" height="24" fill="#000" />
<rect x="299" y="342" width="5" height="9" fill="#000" />
<rect x="300" y="343" width="3" height="7" fill="#ffffff" />
<rect x="309" y="325" width="1" height="24" fill="#000" />
<rect x="307" y="342" width="5" height="3" fill="#000" />
<rect x="308" y="343" width="3" height="1" fill="#ffffff" />
<rect x="317" y="314" width="1" height="31" fill="#000" />
<rect x="315" y="323" width="5" height="19" fill="#000" />
<rect x="316" y="324" width="3" height="17" fill="#ffffff" />
<rect x="325" y="317" width="1" height="14" fill="#000" />
<rect x="323" y="324" width="5" height="3" fill="#000" />
<rect x="324" y="325" width="3" height="1" fill="#ff00ff" />
<rect x="333" y="319" width="1" height="21" fill="#000" />
<rect x="331" y="321" width="5" height="5" fill="#000" />
<rect x="332" y="322" width="3" height="3" fill="#ffffff" />
<rect x="341" y="300" width="1" height="24" fill="#000" />
<rect x="339" y="317" width="5" height="7" fill="#000" />
<rect x="340" y="318" width="3" height="5" fill="#ffffff" />
<rect x="349" y="313" width="1" height="19" fill="#000" />
<rect x="347" y="319" width="5" height="10" fill="#000" />
<rect x="348" y="320" width="3" height="8" fill="#ff00ff" />
<rect x="357" y="312" width="1" height="26" fill="#000" />
<rect x="355" y="315" width="5" height="15" fill="#000" />
<rect x="356" y="316" width="3" height="13" fill="#ffffff" />
<rect x="365" y="314" width="1" height="17" fill="#000" />
<rect x="363" y="314" width="5" height="12" fill="#000" />
<rect x="364" y="315" width="3" height="10" fill="#ff00ff" />
<rect x="373" y="309" width="1" height="17" fill="#000" />
<rect x="371" y="309" width="5" height="17" fill="#000" />
<rect x="372" y="310" width="3" height="15" fill="#ffffff" />
<rect x="381" y="306" width="1" height="16" fill="#000" />
<rect x="379" y="308" width="5" height="11" fill="#000" />
<rect x="380" y="309" width="3" height="9" fill="#ff00ff" />
<rect x="389" y="315" width="1" height="10" fill="#000" />
<rect x="387" y="317" width="5" height="4" fill="#000" />
<rect x="388" y="318" width="3" height="2" fill="#ff00ff" />
<rect x="397" y="308" width="1" height="16" fill="#000" />
<rect x="395" y="310" width="5" height="10" fill="#000" />
<rect x="396" y="311" width="3" height="8" fill="#ffffff" />
<rect x="405" y="301" width="1" height="21" fill="#000" />
<rect x="403" y="301" width="5" height="10" fill="#000" />
<rect x="404" y="302" width="3" height="8" fill="#ffffff" />
<rect x="413" y="282" width="1" height="28" fill="#000" />
<rect x="411" y="296" width="5" height="5" fill="#000" />
<rect x="412" y="297" width="3" height="3" fill="#ffffff" />
<rect x="421" y="294" width="1" height="24" fill="#000" />
<rect x="419" y="295" width="5" height="18" fill="#000" />
<rect x="420" y="296" width="3" height="16" fill="#ff00ff" />
<rect x="429" y="286" width="1" height="28" fill="#000" />
<rect x="427" y="295" width="5" height="19" fill="#000" />
<rect x="428" y="296" width="3" height="17" fill="#ffffff" />
<rect x="437" y="279" width="1" height="17" fill="#000" />
<rect x="435" y="288" width="5" height="7" fill="#000" />
<rect x="436" y="289" width="3" height="5" fill="#ffffff" />
<rect x="445" y="287" width="1" height="9" fill="#000" />
<rect x="443" y="288" width="5" height="5" fill="#000" />
<rect x="444" y="289" width="3" height="3" fill="#ff00ff" />
<rect x="453" y="284" width="1" height="19" fill="#000" />
<rect x="451" y="289" width="5" height="4" fill="#000" />
<rect x="452" y="290" width="3" height="2" fill="#ffffff" />
<rect x="461" y="287" width="1" height="15" fill="#000" />
<rect x="459" y="290" width="5" height="9" fill="#000" />
<rect x="460" y="291" width="3" height="7" fill="#ff00ff" />
<rect x="469" y="282" width="1" height="18" fill="#000" />
<rect x="467" y="282" width="5" height="18" fill="#000" />
<rect x="468" y="283" width="3" height="16" fill="#ffffff" />
<rect x="477" y="279" width="1" height="24" fill="#000" />
<rect x="475" y="283" width="5" height="6" fill="#000" />
<rect x="476" y="284" width="3" height="4" fill="#ff00ff" />
<rect x="485" y="286" width="1" height="28" fill="#000" />
<rect x="483" y="289" width="5" height="25" fill="#000" />
<rect x="484" y="290" width="3" height="23" fill="#ff00ff" />
<rect x="493" y="303" width="1" height="17" fill="#000" />
<rect x="491" y="303" width="5" height="9" fill="#000" />
<rect x="492" y="304" width="3" height="7" fill="#ffffff" />
<rect x="501" y="302" width="1" height="20" fill="#000" />
<rect x="499" y="302" width="5" height="19" fill="#000" />
<rect x="500" y="303" width="3" height="17" fill="#ff00ff" />
<rect x="509" y="312" width="1" height="21" fill="#000" />
<rect x="507" y="313" width="5" height="4" fill="#000" />
<rect x="508" y="314" width="3" height="2" fill="#ffffff" />
<rect x="517" y="304" width="1" height="16" fill="#000" />
<rect x="515" y="305" width="5" height="10" fill="#000" />
<rect x="516" y="306" width="3" height="8" fill="#ffffff" />
<rect x="525" y="298" width="1" height="20" fill="#000" />
<rect x="523" y="304" width="5" height="12" fill="#000" />
<rect x="524" y="305" width="3" height="10" fill="#ff00ff" />
<rect x="533" y="282" width="1" height="31" fill="#000" />
<rect x="531" y="283" width="5" height="30" fill="#000" />
<rect x="532" y="284" width="3" height="28" fill="#ffffff" />
<rect x="541" y="284" width="1" height="23" fill="#000" />
<rect x="539" y="284" width="5" height="22" fill="#000" />
<rect x="540" y="285" width="3" height="20" fill="#ff00ff" />
<rect x="549" y="302" width="1" height="22" fill="#000" />
<rect x="547" y="306" width="5" height="16" fill="#000" />
<rect x="548" y="307" width="3" height="14" fill="#ff00ff" />
<rect x="557" y="321" width="1" height="18" fill="#000" />
<rect x="555" y="321" width="5" height="8" fill="#000" />
<rect x="556" y="322" width="3" height="6" fill="#ff00ff" />
<rect x="565" y="329" width="1" height="25" fill="#000" />
<rect x="563" y="330" width="5" height="24" fill="#000" />
<rect x="564" y="331" width="3" height="22" fill="#ff00ff" />
<rect x="573" y="338" width="1" height="19" fill="#000" />
<rect x="571" y="350" width="5" height="3" fill="#000" />
<rect x="572" y="351" width="3" height="1" fill="#ff00ff" />
<rect x="581" y="345" width="1" height="16" fill="#000" />
<rect x="579" y="346" width="5" height="7" fill="#000" />
<rect x="580" y="347" width="3" height="5" fill="#ffffff" />
<rect x="589" y="344" width="1" height="17" fill="#000" />
<rect x="587" y="346" width="5" height="1" fill="#000" />
<rect x="597" y="341" width="1" height="19" fill="#000" />
<rect x="595" y="345" width="5" height="14" fill="#000" />
<rect x="596" y="346" width="3" height="12" fill="#ff00ff" />
<rect x="605" y="353" width="1" height="12" fill="#000" />
<rect x="603" y="359" width="5" height="4" fill="#000" />
<rect x="604" y="360" width="3" height="2" fill="#ff00ff" />
<rect x="613" y="363" width="1" height="57" fill="#000" />
<rect x="611" y="363" width="5" height="37" fill="#000" />
<rect x="612" y="364" width="3" height="35" fill="#ff00ff" />
<rect x="621" y="387" width="1" height="22" fill="#000" />
<rect x="619" y="395" width="5" height="6" fill="#000" />
<rect x="620" y="396" width="3" height="4" fill="#ffffff" />
<rect x="629" y="382" width="1" height="29" fill="#000" />
<rect x="627" y="395" width="5" height="9" fill="#000" />
<rect x="628" y="396" width="3" height="7" fill="#ff00ff" />
<rect x="637" y="403" width="1" height="40" fill="#000" />
<rect x="635" y="404" width="5" height="19" fill="#000" />
<rect x="636" y="405" width="3" height="17" fill="#ff00ff" />
<rect x="645" y="399" width="1" height="32" fill="#000" />
<rect x="643" y="399" width="5" height="25" fill="#000" />
<rect x="644" y="400" width="3" height="23" fill="#ffffff" />
<rect x="653" y="393" width="1" height="16" fill="#000" />
<rect x="651" y="393" width="5" height="5" fill="#000" />
<rect x="652" y="394" width="3" height="3" fill="#ffffff" />
<rect x="661" y="389" width="1" height="21" fill="#000" />
<rect x="659" y="392" width="5" height="18" fill="#000" />
<rect x="660" y="393" width="3" height="16" fill="#ff00ff" />
<rect x="669" y="401" width="1" height="23" fill="#000" />
<rect x="667" y="410" width="5" height="10" fill="#000" />
<rect x="668" y="411" width="3" height="8" fill="#ff00ff" />
<rect x="677" y="414" width="1" height="16" fill="#000" />
<rect x="675" y="418" width="5" height="3" fill="#000" />
<rect x="676" y="419" width="3" height="1" fill="#ff00ff" />
<rect x="685" y="412" width="1" height="18" fill="#000" />
<rect x="683" y="412" width="5" height="8" fill="#000" />
<rect x="684" y="413" width="3" height="6" fill="#ffffff" />
<rect x="693" y="399" width="1" height="12" fill="#000" />
<rect x="691" y="405" width="5" height="6" fill="#000" />
<rect x="692" y="406" width="3" height="4" fill="#ffffff" />
<rect x="701" y="398" width="1" height="9" fill="#000" />
<rect x="699" y="399" width="5" height="8" fill="#000" />
<rect x="700" y="400" width="3" height="6" fill="#ffffff" />
<rect x="709" y="385" width="1" height="14" fill="#000" />
<rect x="707" y="387" width="5" height="11" fill="#000" />
<rect x="708" y="388" width="3" height="9" fill="#ffffff" />
<rect x="717" y="390" width="1" height="20" fill="#000" />
<rect x="715" y="390" width="5" height="19" fill="#000" />
<rect x="716" y="391" width="3" height="17" fill="#ff00ff" />
<rect x="725" y="405" width="1" height="11" fill="#000" />
<rect x="723" y="406" width="5" height="2" fill="#000" />
<rect x="733" y="404" width="1" height="8" fill="#000" />
<rect x="731" y="405" width="5" height="7" fill="#000" />
<rect x="732" y="406" width="3" height="5" fill="#ff00ff" />
<rect x="741" y="401" width="1" height="21" fill="#000" />
<rect x="739" y="412" width="5" height="1" fill="#000" />
<rect x="749" y="411" width="1" height="17" fill="#000" />
<rect x="747" y="411" width="5" height="17" fill="#000" />
<rect x="748" y="412" width="3" height="15" fill="#ff00ff" />
<rect x="757" y="418" width="1" height="19" fill="#000" />
<rect x="755" y="427" width="5" height="10" fill="#000" />
<rect x="756" y="428" width="3" height="8" fill="#ff00ff" />
<rect x="765" y="433" width="1" height="8" fill="#000" />
<rect x="763" y="433" width="5" height="4" fill="#000" />
<rect x="764" y="434" width="3" height="2" fill="#ffffff" />
<rect x="773" y="427" width="1" height="21" fill="#000" />
<rect x="771" y="432" width="5" height="8" fill="#000" />
<rect x="772" y="433" width="3" height="6" fill="#ff00ff" />
<rect x="781" y="439" width="1" height="12" fill="#000" />
<rect x="779" y="440" width="5" height="4" fill="#000" />
<rect x="780" y="441" width="3" height="2" fill="#ff00ff" />
</g>
<rect x="5" y="258" width="974" height="1" fill="#ff0000" />
<rect x="5" y="285" width="974" height="1" fill="#ff0000" />
<rect x="5" y="354" width="974" height="1" fill="#ff0000" />
<rect x="5" y="386" width="974" height="1" fill="#ff0000" />
<rect x="4" y="216" width="976" height="1" fill="#000" />
<rect x="4" y="501" width="976" height="1" fill="#000" />
<rect x="4" y="216" width="1" height="286" fill="#000" />
<rect x="979" y="216" width="1" height="286" fill="#000" />
<rect x="980" y="228" width="2" height="1" fill="#000" />
<text x="986" y="231" font-family="Liberation Sans" font-size="10" fill="#000" text-anchor="start" font-weight="normal" textLength="32" lengthAdjust="spacingAndGlyphs" stroke="#000" stroke-width="0.25" >1.56685</text>
<rect x="980" y="261" width="2" height="1" fill="#000" />
<text x="986" y="264" font-family="Liberation Sans" font-size="10" fill="#000" text-anchor="start" font-weight="normal" textLength="32" lengthAdjust="spacingAndGlyphs" stroke="#000" stroke-width="0.25" >1.56635</text>
<rect x="980" y="295" width="2" height="1" fill="#000" />
<text x="986" y="298" font-family="Liberation Sans" font-size="10" fill="#000" text-anchor="start" font-weight="normal" textLength="32" lengthAdjust="spacingAndGlyphs" stroke="#000" stroke-width="0.25" >1.56585</text>
<rect x="980" y="329" width="2" height="1" fill="#000" />
<text x="986" y="332" font-family="Liberation Sans" font-size="10" fill="#000" text-anchor="start" font-weight="normal" textLength="32" lengthAdjust="spacingAndGlyphs" stroke="#000" stroke-width="0.25" >1.56535</text>
<rect x="980" y="362" width="2" height="1" fill="#000" />
<text x="986" y="365" font-family="Liberation Sans" font-size="10" fill="#000" text-anchor="start" font-weight="normal" textLength="32" lengthAdjust="spacingAndGlyphs" stroke="#000" stroke-width="0.25" >1.56485</text>
<rect x="980" y="396" width="2" height="1" fill="#000" />
<text x="986" y="399" font-family="Liberation Sans" font-size="10" fill="#000" text-anchor="start" font-weight="normal" textLength="32" lengthAdjust="spacingAndGlyphs" stroke="#000" stroke-width="0.25" >1.56435</text>
<rect x="980" y="430" width="2" height="1" fill="#000" />
<text x="986" y="433" font-family="Liberation Sans" font-size="10" fill="#000" text-anchor="start" font-weight="normal" textLength="32" lengthAdjust="spacingAndGlyphs" stroke="#000" stroke-width="0.25" >1.56385</text>
<rect x="980" y="463" width="2" height="1" fill="#000" />
<text x="986" y="466" font-family="Liberation Sans" font-size="10" fill="#000" text-anchor="start" font-weight="normal" textLength="32" lengthAdjust="spacingAndGlyphs" stroke="#000" stroke-width="0.25" >1.56335</text>
<rect x="980" y="497" width="2" height="1" fill="#000" />
<text x="986" y="500" font-family="Liberation Sans" font-size="10" fill="#000" text-anchor="start" font-weight="normal" textLength="32" lengthAdjust="spacingAndGlyphs" stroke="#000" stroke-width="0.25" >1.56285</text>
<rect x="981" y="252" width="41" height="11" fill="#ff0000" />
<text x="986" y="261" font-family="Liberation Sans" font-size="10" fill="#f0b0b0" text-anchor="start" font-weight="normal" textLength="32" lengthAdjust="spacingAndGlyphs" >1.56640</text>
<rect x="981" y="279" width="41" height="11" fill="#ff0000" />
<text x="986" y="288" font-family="Liberation Sans" font-size="10" fill="#f0b0b0" text-anchor="start" font-weight="normal" textLength="32" lengthAdjust="spacingAndGlyphs" >1.56600</text>
<rect x="981" y="348" width="41" height="11" fill="#ff0000" />
<text x="986" y="357" font-family="Liberation Sans" font-size="10" fill="#f0b0b0" text-anchor="start" font-weight="normal" textLength="32" lengthAdjust="spacingAndGlyphs" >1.56498</text>
<rect x="981" y="380" width="41" height="11" fill="#ff0000" />
<text x="986" y="389" font-family="Liberation Sans" font-size="10" fill="#f0b0b0" text-anchor="start" font-weight="normal" textLength="32" lengthAdjust="spacingAndGlyphs" >1.56449</text>
<rect x="981" y="437" width="41" height="11" fill="#000000" />
<text x="986" y="446" font-family="Liberation Sans" font-size="10" fill="#f0f0f0" text-anchor="start" font-weight="normal" textLength="32" lengthAdjust="spacingAndGlyphs" stroke="#f0f0f0" stroke-width="0.1" >1.56365</text>
<rect x="5" y="502" width="1" height="3" fill="#000" />
<text x="5" y="514" font-family="Liberation Sans" font-size="10" fill="#000" text-anchor="start" font-weight="normal" textLength="51.5" lengthAdjust="spacingAndGlyphs" stroke="#000" stroke-width="0.25" >19 Aug 2015</text>
<rect x="69" y="502" width="1" height="3" fill="#000" />
<text x="69" y="514" font-family="Liberation Sans" font-size="10" fill="#000" text-anchor="start" font-weight="normal" textLength="55" lengthAdjust="spacingAndGlyphs" stroke="#000" stroke-width="0.25" >19 Aug 16:02</text>
<rect x="133" y="502" width="1" height="3" fill="#000" />
<text x="133" y="514" font-family="Liberation Sans" font-size="10" fill="#000" text-anchor="start" font-weight="normal" textLength="55" lengthAdjust="spacingAndGlyphs" stroke="#000" stroke-width="0.25" >19 Aug 16:10</text>
<rect x="197" y="502" width="1" height="3" fill="#000" />
<text x="197" y="514" font-family="Liberation Sans" font-size="10" fill="#000" text-anchor="start" font-weight="normal" textLength="55" lengthAdjust="spacingAndGlyphs" stroke="#000" stroke-width="0.25" >19 Aug 16:18</text>
<rect x="261" y="502" width="1" height="3" fill="#000" />
<text x="261" y="514" font-family="Liberation Sans" font-size="10" fill="#000" text-anchor="start" font-weight="normal" textLength="55" lengthAdjust="spacingAndGlyphs" stroke="#000" stroke-width="0.25" >19 Aug 16:26</text>
<rect x="325" y="502" width="1" height="3" fill="#000" />
<text x="325" y="514" font-family="Liberation Sans" font-size="10" fill="#000" text-anchor="start" font-weight="normal" textLength="55" lengthAdjust="spacingAndGlyphs" stroke="#000" stroke-width="0.25" >19 Aug 16:34</text>
<rect x="389" y="502" width="1" height="3" fill="#000" />
<text x="389" y="514" font-family="Liberation Sans" font-size="10" fill="#000" text-anchor="start" font-weight="normal" textLength="55" lengthAdjust="spacingAndGlyphs" stroke="#000" stroke-width="0.25" >19 Aug 16:42</text>
<rect x="453" y="502" width="1" height="3" fill="#000" />
<text x="453" y="514" font-family="Liberation Sans" font-size="10" fill="#000" text-anchor="start" font-weight="normal" textLength="55" lengthAdjust="spacingAndGlyphs" stroke="#000" stroke-width="0.25" >19 Aug 16:50</text>
<rect x="517" y="502" width="1" height="3" fill="#000" />
<text x="517" y="514" font-family="Liberation Sans" font-size="10" fill="#000" text-anchor="start" font-weight="normal" textLength="55" lengthAdjust="spacingAndGlyphs" stroke="#000" stroke-width="0.25" >19 Aug 16:58</text>
<rect x="581" y="502" width="1" height="3" fill="#000" />
<text x="581" y="514" font-family="Liberation Sans" font-size="10" fill="#000" text-anchor="start" font-weight="normal" textLength="55" lengthAdjust="spacingAndGlyphs" stroke="#000" stroke-width="0.25" >19 Aug 17:06</text>
<rect x="645" y="502" width="1" height="3" fill="#000" />
<text x="645" y="514" font-family="Liberation Sans" font-size="10" fill="#000" text-anchor="start" font-weight="normal" textLength="55" lengthAdjust="spacingAndGlyphs" stroke="#000" stroke-width="0.25" >19 Aug 17:14</text>
<rect x="709" y="502" width="1" height="3" fill="#000" />
<text x="709" y="514" font-family="Liberation Sans" font-size="10" fill="#000" text-anchor="start" font-weight="normal" textLength="55" lengthAdjust="spacingAndGlyphs" stroke="#000" stroke-width="0.25" >19 Aug 17:22</text>
<rect x="773" y="502" width="1" height="3" fill="#000" />
<text x="773" y="514" font-family="Liberation Sans" font-size="10" fill="#000" text-anchor="start" font-weight="normal" textLength="55" lengthAdjust="spacingAndGlyphs" stroke="#000" stroke-width="0.25" >19 Aug 17:30</text>
<path d="M778 217 h9 l-4.5 5 z" fill="#c8c8c8"/>
<path d="M5 496 v5 h5 z" fill="#d0d0d0"/>
<path d="M9.5 223 h6 l-3 3.5 z" fill="#000"/>
<text x="20.9" y="228" font-family="Liberation Sans" font-size="10" fill="#000" text-anchor="start" font-weight="normal" textLength="54" lengthAdjust="spacingAndGlyphs" stroke="#000" stroke-width="0.25" >GBPUSD,M1</text>
<text x="81.5" y="228" font-family="Liberation Sans" font-size="10" fill="#000" text-anchor="start" font-weight="normal" textLength="140.5" lengthAdjust="spacingAndGlyphs" stroke="#000" stroke-width="0.25" >1.56370 1.56371 1.56355 1.56365</text>
<text x="11.5" y="377" font-family="Liberation Sans" font-size="10" fill="#000" text-anchor="start" font-weight="normal" textLength="103.3" lengthAdjust="spacingAndGlyphs" stroke="#000" stroke-width="0.25" >#51734757 sell limit 0.10</text>
<text x="11.5" y="404" font-family="Liberation Sans" font-size="10" fill="#000" text-anchor="start" font-weight="normal" textLength="83.3" lengthAdjust="spacingAndGlyphs" stroke="#000" stroke-width="0.25" >#51735033 sell 0.10</text>
<text x="11.5" y="440" font-family="Liberation Sans" font-size="10" fill="#000" text-anchor="start" font-weight="normal" textLength="57.5" lengthAdjust="spacingAndGlyphs" stroke="#000" stroke-width="0.25" >#51735033 tp</text>
<rect x="0" y="520" width="1024" height="20" fill="#f0f0f0" />
<rect x="299" y="524" width="1" height="16" fill="#a0a0a0" />
<rect x="300" y="524" width="1" height="16" fill="#ffffff" />
<rect x="415" y="524" width="1" height="16" fill="#a0a0a0" />
<rect x="416" y="524" width="1" height="16" fill="#ffffff" />
<rect x="516" y="524" width="1" height="16" fill="#a0a0a0" />
<rect x="517" y="524" width="1" height="16" fill="#ffffff" />
<rect x="587" y="524" width="1" height="16" fill="#a0a0a0" />
<rect x="588" y="524" width="1" height="16" fill="#ffffff" />
<rect x="658" y="524" width="1" height="16" fill="#a0a0a0" />
<rect x="659" y="524" width="1" height="16" fill="#ffffff" />
<rect x="726" y="524" width="1" height="16" fill="#a0a0a0" />
<rect x="727" y="524" width="1" height="16" fill="#ffffff" />
<rect x="796" y="524" width="1" height="16" fill="#a0a0a0" />
<rect x="797" y="524" width="1" height="16" fill="#ffffff" />
<rect x="862" y="524" width="1" height="16" fill="#a0a0a0" />
<rect x="863" y="524" width="1" height="16" fill="#ffffff" />
<text x="3" y="536" font-family="Liberation Sans" font-size="11.5" fill="#000" text-anchor="start" font-weight="normal" textLength="89.5" lengthAdjust="spacingAndGlyphs" stroke="#000" stroke-width="0.25" >For Help, press F1</text>
<text x="304.6" y="536" font-family="Liberation Sans" font-size="11.5" fill="#000" text-anchor="start" font-weight="normal" textLength="6" lengthAdjust="spacingAndGlyphs" stroke="#000" stroke-width="0.25" >2</text>
<text x="420" y="536" font-family="Liberation Sans" font-size="11.5" fill="#000" text-anchor="start" font-weight="normal" textLength="83" lengthAdjust="spacingAndGlyphs" stroke="#000" stroke-width="0.25" >2015.08.19 16:24</text>
<text x="522" y="536" font-family="Liberation Sans" font-size="11.5" fill="#000" text-anchor="start" font-weight="normal" textLength="53.5" lengthAdjust="spacingAndGlyphs" stroke="#000" stroke-width="0.25" >O: 1.56626</text>
<text x="593" y="536" font-family="Liberation Sans" font-size="11.5" fill="#000" text-anchor="start" font-weight="normal" textLength="52.8" lengthAdjust="spacingAndGlyphs" stroke="#000" stroke-width="0.25" >H: 1.56628</text>
<text x="664.3" y="536" font-family="Liberation Sans" font-size="11.5" fill="#000" text-anchor="start" font-weight="normal" textLength="48.7" lengthAdjust="spacingAndGlyphs" stroke="#000" stroke-width="0.25" >L: 1.56595</text>
<text x="732.5" y="536" font-family="Liberation Sans" font-size="11.5" fill="#000" text-anchor="start" font-weight="normal" textLength="50.7" lengthAdjust="spacingAndGlyphs" stroke="#000" stroke-width="0.25" >C: 1.56599</text>
<text x="801.6" y="536" font-family="Liberation Sans" font-size="11.5" fill="#000" text-anchor="start" font-weight="normal" textLength="24.4" lengthAdjust="spacingAndGlyphs" stroke="#000" stroke-width="0.25" >V: 69</text>
<text x="939" y="536" font-family="Liberation Sans" font-size="11.5" fill="#000" text-anchor="start" font-weight="normal" textLength="36.8" lengthAdjust="spacingAndGlyphs" stroke="#000" stroke-width="0.25" >93/2 kb</text>
<rect x="868" y="526" width="2" height="10" fill="#4a6a00" />
<rect x="868" y="536" width="2" height="2" fill="#002848" />
<rect x="871" y="526" width="2" height="9" fill="#4a6a00" />
<rect x="871" y="535" width="2" height="3" fill="#002848" />
<rect x="874" y="526" width="2" height="8" fill="#4a6a00" />
<rect x="874" y="534" width="2" height="4" fill="#002848" />
<rect x="877" y="526" width="2" height="7" fill="#4a6a00" />
<rect x="877" y="533" width="2" height="5" fill="#002848" />
<rect x="880" y="526" width="2" height="6" fill="#4a6a00" />
<rect x="880" y="532" width="2" height="6" fill="#002848" />
<rect x="883" y="526" width="2" height="5" fill="#4a6a00" />
<rect x="883" y="531" width="2" height="7" fill="#002848" />
<rect x="886" y="526" width="2" height="4" fill="#4a6a00" />
<rect x="886" y="530" width="2" height="8" fill="#002848" />
<rect x="889" y="526" width="2" height="3" fill="#4a6a00" />
<rect x="889" y="529" width="2" height="9" fill="#002848" />
</svg></body></html>
